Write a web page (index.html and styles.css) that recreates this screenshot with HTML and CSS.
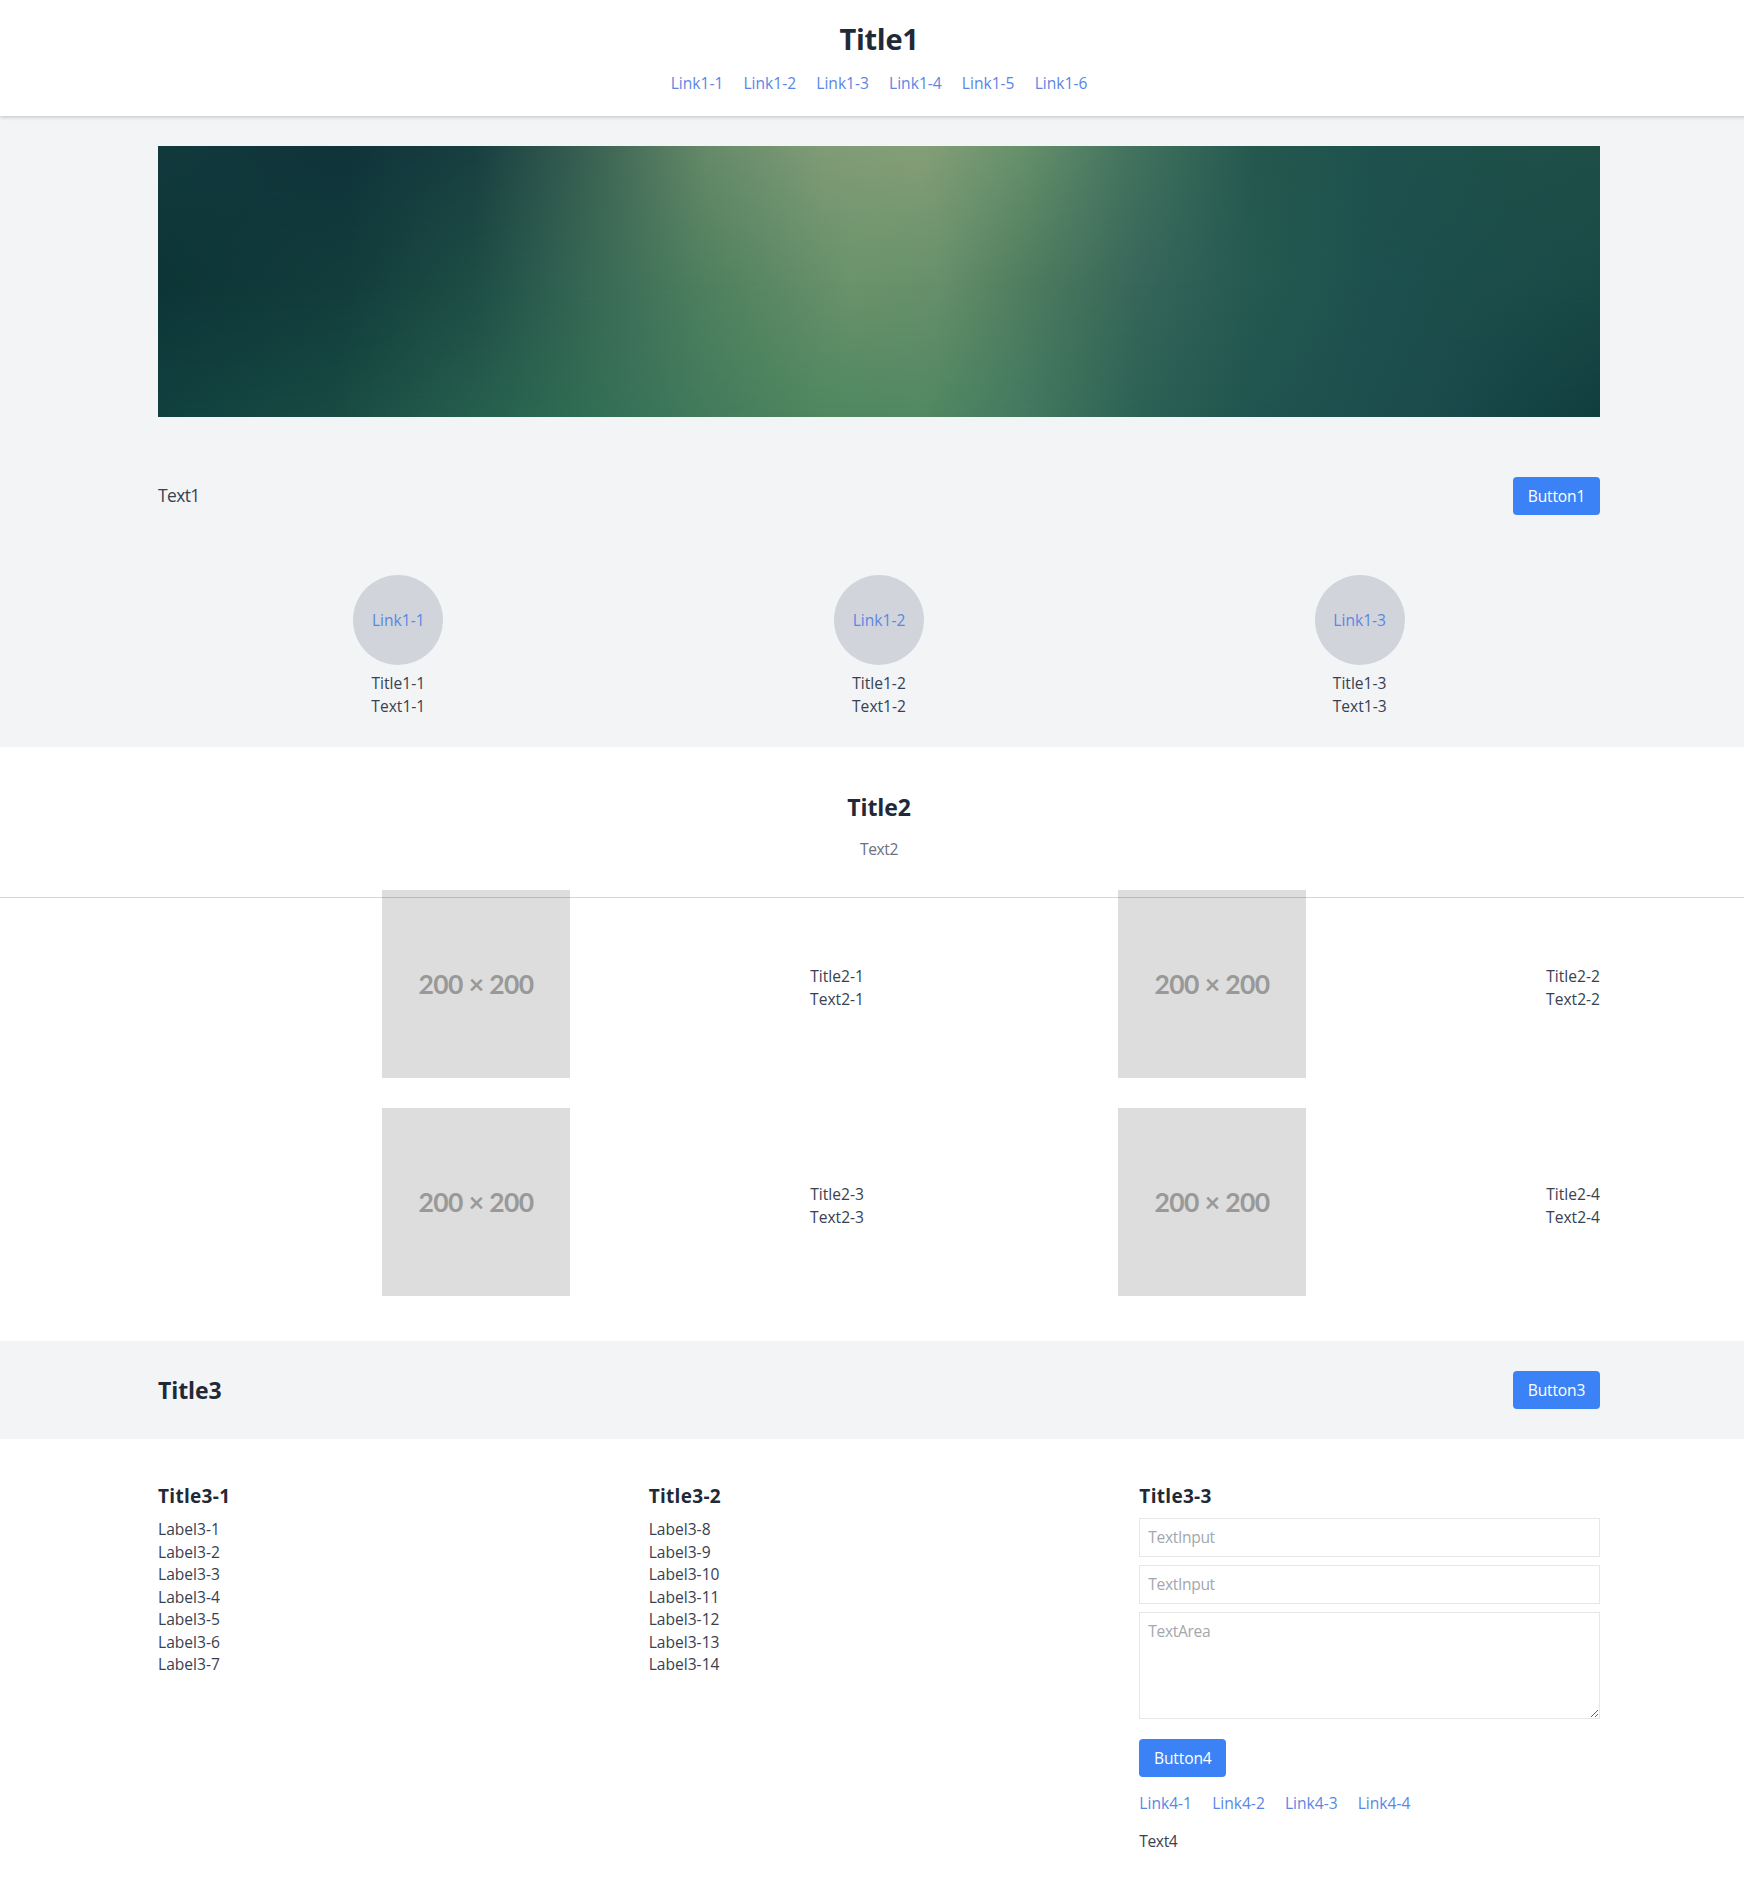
FILE: index.html
```html
<!DOCTYPE html>
<html lang="en">
<head>
<meta charset="utf-8">
<title>Title1</title>
<link rel="stylesheet" href="styles.css">
</head>
<body>
<div class="page">
  <header class="header">
    <h1 class="site-title">Title1</h1>
    <nav class="links">
      <a href="#">Link1-1</a><a href="#">Link1-2</a><a href="#">Link1-3</a><a href="#">Link1-4</a><a href="#">Link1-5</a><a href="#">Link1-6</a>
    </nav>
  </header>

  <section class="intro">
    <div class="container">
      <div class="hero"></div>
      <div class="bar intro-bar">
        <p class="lead">Text1</p>
        <button class="button">Button1</button>
      </div>
      <div class="circles">
        <div class="circle-item"><div class="circle"><a href="#">Link1-1</a></div><p>Title1-1</p><p>Text1-1</p></div>
        <div class="circle-item"><div class="circle"><a href="#">Link1-2</a></div><p>Title1-2</p><p>Text1-2</p></div>
        <div class="circle-item"><div class="circle"><a href="#">Link1-3</a></div><p>Title1-3</p><p>Text1-3</p></div>
      </div>
    </div>
  </section>

  <section class="gallery">
    <h2 class="title">Title2</h2>
    <p class="subtitle">Text2</p>
    <div class="container cards">
      <div class="card"><div class="thumb-area"><div class="thumb">200 × 200</div></div><div class="caption"><p>Title2-1</p><p>Text2-1</p></div></div>
      <div class="card"><div class="thumb-area"><div class="thumb">200 × 200</div></div><div class="caption"><p>Title2-2</p><p>Text2-2</p></div></div>
      <div class="card"><div class="thumb-area"><div class="thumb">200 × 200</div></div><div class="caption"><p>Title2-3</p><p>Text2-3</p></div></div>
      <div class="card"><div class="thumb-area"><div class="thumb">200 × 200</div></div><div class="caption"><p>Title2-4</p><p>Text2-4</p></div></div>
    </div>
  </section>

  <section class="banner">
    <div class="container bar">
      <h2 class="title">Title3</h2>
      <button class="button">Button3</button>
    </div>
  </section>

  <footer class="container footer">
    <div>
      <h3 class="column-title">Title3-1</h3>
      <ul class="labels"><li>Label3-1</li><li>Label3-2</li><li>Label3-3</li><li>Label3-4</li><li>Label3-5</li><li>Label3-6</li><li>Label3-7</li></ul>
    </div>
    <div>
      <h3 class="column-title">Title3-2</h3>
      <ul class="labels"><li>Label3-8</li><li>Label3-9</li><li>Label3-10</li><li>Label3-11</li><li>Label3-12</li><li>Label3-13</li><li>Label3-14</li></ul>
    </div>
    <div>
      <h3 class="column-title">Title3-3</h3>
      <form class="form">
        <input class="field" type="text" placeholder="TextInput">
        <input class="field" type="text" placeholder="TextInput">
        <textarea class="field area" placeholder="TextArea"></textarea>
        <button class="button" type="button">Button4</button>
      </form>
      <nav class="links footer-links"><a href="#">Link4-1</a><a href="#">Link4-2</a><a href="#">Link4-3</a><a href="#">Link4-4</a></nav>
      <p class="note">Text4</p>
    </div>
  </footer>
</div>
</body>
</html>
```
FILE: styles.css
```css
*, *::before, *::after { box-sizing: border-box; }
html { overflow: hidden; }
body {
  margin: 0;
  background: #fff;
  color: #374151;
  font: 15.6px/22.5px "Open Sans", "Noto Sans", sans-serif;
}
h1, h2, h3, p, ul { margin: 0; padding: 0; }
ul { list-style: none; }
a { color: #5b86e5; text-decoration: none; }
.page { width: 1758px; height: 1897px; }
.container { width: 1442px; margin: 0 auto; }

.header {
  position: relative;
  height: 116px;
  padding-top: 19px;
  background: #fff;
  text-align: center;
  box-shadow: 0 1px 4px rgba(0, 0, 0, .22);
}
.site-title { font-size: 29px; line-height: 40px; letter-spacing: -.3px; color: #1f2937; }
.links { display: flex; gap: 20px; }
.links a { width: 52.8px; white-space: nowrap; }
.header .links { justify-content: center; margin-top: 13px; }

.intro { height: 631px; padding-top: 30px; background: #f2f4f6; }
.hero {
  position: relative;
  height: 271px;
  background: linear-gradient(90deg, #123a3d 0%, #0f343a 13%, #183f41 22%, #3a6253 30%, #668a69 38%, #809c77 46%, #859f78 53%, #66916b 60%, #457560 67%, #25594f 76%, #1e524e 84%, #1f4f47 100%);
}
.hero::before, .hero::after { content: ""; position: absolute; inset: 0; }
.hero::before {
  background: linear-gradient(90deg, #0d3537 0%, #123c3c 13%, #1e4d45 22%, #386855 30%, #4f805f 38%, #6b936b 48%, #67906a 54%, #4c7a5e 61%, #38665a 68%, #245a51 76%, #1d514f 84%, #1a4a46 100%);
  mask-image: linear-gradient(transparent, #000 50%);
}
.hero::after {
  background: linear-gradient(90deg, #11403f 0%, #184b43 12%, #235b4b 20%, #2d6a53 28%, #427b5c 38%, #4f875f 46%, #518862 53%, #437960 60%, #2b6254 68%, #205450 76%, #1b4c4c 88%, #113d3f 100%);
  mask-image: linear-gradient(transparent 50%, #000);
}
.bar { display: flex; justify-content: space-between; align-items: center; }
.intro-bar { margin-top: 60px; }
.lead { padding-bottom: 1px; font-size: 17.4px; letter-spacing: -.6px; }
.button {
  display: block;
  width: 87px;
  height: 38px;
  padding: 0;
  border: 0;
  border-radius: 4px;
  background: #3b82f6;
  color: #fff;
  font: inherit;
  letter-spacing: -.15px;
}
.circles { display: grid; grid-template-columns: repeat(3, 1fr); margin-top: 60px; text-align: center; }
.circle {
  display: flex;
  align-items: center;
  justify-content: center;
  width: 90px;
  height: 90px;
  margin: 0 auto 7px;
  border-radius: 50%;
  background: #d1d5db;
}

.gallery { height: 594px; padding-top: 45px; text-align: center; }
.title { font-size: 23px; line-height: 30px; letter-spacing: -.1px; color: #1f2937; }
.subtitle { margin-top: 16px; color: #6b7280; letter-spacing: -.4px; }
.cards { display: grid; grid-template-columns: 1fr 1fr; gap: 30px; margin-top: 29px; }
.gallery::after {
  content: "";
  position: absolute;
  top: 897px;
  left: 0;
  width: 100%;
  height: 1px;
  background: rgba(0, 0, 0, .16);
}
.card { display: flex; align-items: center; gap: 16px; }
.thumb-area { flex: 1; }
.thumb {
  width: 188px;
  height: 188px;
  margin: 0 auto;
  background: #ddd;
  color: #999;
  font: bold 26.5px/188px Lato, sans-serif;
  letter-spacing: -.6px;
}
.caption { padding-top: 8px; }

.banner { display: flex; align-items: center; height: 98px; background: #f2f4f6; }

.footer { display: grid; grid-template-columns: repeat(3, 1fr); gap: 30px; padding-top: 43px; }
.column-title { font-size: 19px; line-height: 28px; letter-spacing: .3px; color: #1f2937; }
.labels { margin-top: 8px; }
.form { margin-top: 8px; }
.field {
  display: block;
  width: 100%;
  height: 39px;
  margin: 0 0 8px;
  padding: 7px 8px 8px;
  border: 1px solid #e5e7eb;
  border-radius: 0;
  background: #fff;
  font: inherit;
  letter-spacing: -.35px;
  outline: 0;
}
.field::placeholder { color: #a3a7ae; }
.area { height: 107px; margin-bottom: 20px; resize: vertical; }
.footer-links { margin-top: 15px; }
.note { margin-top: 15px; letter-spacing: -.4px; }
```
